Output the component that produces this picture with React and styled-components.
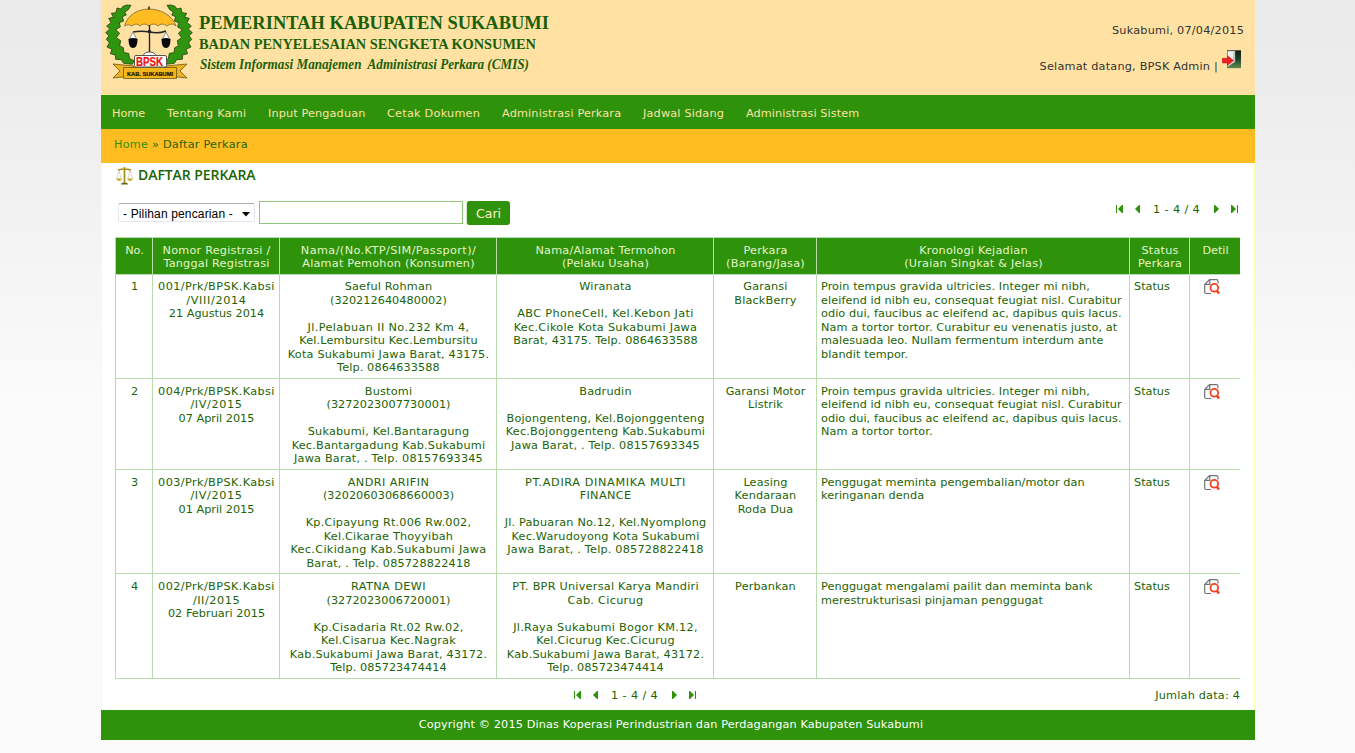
import React from 'react';
import styled, { createGlobalStyle } from 'styled-components';

const Global = createGlobalStyle`
  html { background: #fbfbfb; }
  body {
    margin: 0; min-height: 753px; overflow: hidden;
    background: linear-gradient(#eaeaea 0, #ededed 100px, #fbfbfb 410px, #fbfbfb 100%);
    font-family: "DejaVu Sans", Verdana, sans-serif; font-size: 11.25px; line-height: 13.5px; color: #1c6406;
  }
  * { box-sizing: border-box; }
`;
const Page = styled.div`width: 1154px; margin-left: 101px;`;
const Header = styled.header`
  height: 95px; background: #ffe2a3; display: flex; justify-content: space-between;
`;
const Brand = styled.div`display: flex; padding-left: 3px;`;
const Titles = styled.svg`
  display: block; flex: none; width: 400px; height: 95px; overflow: visible;
  font-family: "Liberation Serif", serif; fill: #1b6008;
`;
const UserBox = styled.div`
  display: flex; flex-direction: column; align-items: flex-end; color: #333; padding: 24px 11px 0 0; letter-spacing: .21px;
`;
const Welcome = styled.div`display: flex; align-items: flex-start; margin-top: 12px; padding-right: 2px; span { padding-top: 10px; margin-right: 4px; }`;
const Nav = styled.nav`
  height: 34px; background: #2e920b; display: flex; padding: 12px 0 0 11px; gap: 22px;
`;
const NavLink = styled.a`
  color: #ffe2a3; white-space: nowrap; width: ${p => p.$w}px; letter-spacing: ${p => p.$ls}px;
`;
const Crumbs = styled.div`
  height: 34px; background: #ffbd22; padding: 9px 13px; letter-spacing: .24px;
  b { color: #2e920b; font-weight: 400; }
`;
const Main = styled.main`
  height: 547px; background: #fff; border: solid #ffffb8; border-width: 0 1px; padding: 0 14px 0 13px;
`;
const Heading = styled.h1`
  margin: 0; height: 38px; padding: 3px 0 0 1px; display: flex; gap: 5px;
  font: 600 14px/18px "Open Sans", sans-serif; color: #1c6406; letter-spacing: -.07px;
  svg { margin-top: 1px; }
`;
const Tools = styled.div`display: flex; height: 36px; padding-left: 3px;`;
const Select = styled.div`
  width: 137px; height: 19px; margin-top: 2px; border: 1px solid #e3e6ee; border-top-color: #abadb3; border-radius: 2px;
  font: 12px/20px "Liberation Sans", sans-serif; letter-spacing: .15px; color: #000;
  display: flex; justify-content: space-between; padding: 0 4px; white-space: nowrap;
  svg { margin-top: 8px; }
`;
const Input = styled.div`width: 204px; height: 23px; margin-left: 4px; border: 1px solid #8fc57d;`;
const Button = styled.button`
  width: 44px; height: 24px; margin-left: 3px; padding: 0; border: 1px solid #d5e9ce; border-width: 0 0 0 1px; border-radius: 3px;
  background: #2e920b; color: #fff2cf; font: 12.5px/25px "DejaVu Sans", sans-serif;
`;
const Pager = styled.div`
  display: flex; height: 14px; gap: 12px; margin: ${p => p.$top ? '2px 2px 0 auto' : '0'};
  svg { flex: none; margin-top: 2px; }
  span { width: 48px; margin: 0 1px; letter-spacing: .38px; white-space: nowrap; }
`;
const Table = styled.div`width: 1125px; border-top: 1px solid #b8dcae;`;
const Row = styled.div`
  display: grid; grid-template-columns: 37px 127px 217px 217px 103px 313px 60px 51px;
  height: ${p => p.$h}px; border-bottom: 1px solid #b8dcae;
  background: ${p => p.$head ? '#2e920b' : '#fff'}; color: ${p => p.$head ? '#e4f5c8' : '#1c6406'};
`;
const Cell = styled.div`
  border-left: 1px solid #b8dcae; padding: ${p => p.$pad}px 4px 0; text-align: ${p => p.$left ? 'left' : 'center'};
  white-space: pre;
`;
const Line = styled.div`
  height: 13.5px; display: flex; justify-content: ${p => p.$left ? 'flex-start' : 'center'};
  padding-left: ${p => p.$left ? 0 : 1}px; letter-spacing: ${p => p.$ls}px;
`;
const IconCell = styled(Cell)`padding-right: 9px; svg { display: block; margin: 0 auto; }`;
const Bottom = styled.div`
  display: flex; justify-content: space-between; padding: 10px 0 0 459px; white-space: nowrap; letter-spacing: .2px;
`;
const Footer = styled.footer`
  height: 30px; background: #2e920b; color: #fff; line-height: 29px; text-align: center; padding-right: 14px; letter-spacing: .138px;
`;

const Laurel = () => (
  <path
    transform="scale(.3333) translate(-27 0)"
    d="M108 16L96 15 84 19 78 27 66 24 63 38 49 40 55 52 41 55 48 68 35 78 44 87 32 98 42 107 34 118 43 128 36 141 51 148 46 161 61 165 62 178 79 179 86 190 112 193 118 182 104 176 101 160 87 158 85 143 74 138 77 122 64 113 74 100 62 89 76 81 73 68 86 63 82 50 94 45 89 36 100 29z"
    fill="#2f9510" stroke="#26460f" strokeWidth="2.500" strokeLinejoin="round"
  />
);
const Logo = () => (
  <svg width="94" height="84" viewBox="0 0 94 84">
    <Laurel />
    <g transform="translate(90 0) scale(-1 1)"><Laurel /></g>
    <path d="M20.500 26C23 16 33 9 45 9s24 7 27 17q-4-4-9 0-5-4-9 0-4-4-9 0-5-4-9 0-4-4-8 0-4-3-7.500 0z" fill="#ffbd22" stroke="#80642c" strokeWidth=".8" />
    <path d="M45 6.500v3" stroke="#222" strokeWidth="1.500" />
    <path d="M45.500 25v29M29 32q8-1.500 16.500 0 9 2 16.500-1" fill="none" stroke="#252525" strokeWidth="1.400" />
    <circle cx="45.500" cy="31.500" r="1.800" fill="#222" />
    {[29, 62].map(x => (
      <g key={x}>
        <path d={`M${x} 32l-4 8h8z`} fill="#fff" stroke="#777" strokeWidth=".8" />
        <path d={`M${x - 4.500} 39q4.500-2 9 0 0 9-4.500 9t-4.500-9z`} fill="#080808" />
      </g>
    ))}
    <path d="M39 56q1-4 6.500-4t6.500 4z" fill="#fff" stroke="#555" />
    <path d="M9 64l21 2-2 10-19 2 7-7zM83 64l-21 2 2 10 19 2-7-7z" fill="#eeb320" stroke="#6b5515" strokeWidth=".8" />
    <path d="M19.500 67.500h53v11h-53z" fill="#f2b61b" stroke="#6b5515" strokeWidth=".8" />
    <rect x="30.500" y="55.500" width="32" height="11.500" rx="1.500" fill="#fff" stroke="#555" />
    <text x="45.500" y="65.500" textAnchor="middle" textLength="27" lengthAdjust="spacingAndGlyphs" fontFamily="Liberation Sans" fontWeight="700" fontSize="12" fill="#f01010" stroke="#f01010" strokeWidth=".2">BPSK</text>
    <text x="46" y="75.500" textAnchor="middle" textLength="46" lengthAdjust="spacingAndGlyphs" fontFamily="Liberation Sans" fontWeight="700" fontSize="6" fill="#151000" stroke="#151000" strokeWidth=".2">KAB. SUKABUMI</text>
  </svg>
);
const Door = () => (
  <svg width="20" height="19" viewBox="0 0 20 19">
    <defs>
      <linearGradient id="room" x1="0" y1="0" x2="0" y2="1">
        <stop offset="0" stopColor="#101a12" /><stop offset=".5" stopColor="#20402a" /><stop offset="1" stopColor="#5c8d48" />
      </linearGradient>
    </defs>
    <path d="M5 .3h14v17.900H5z" fill="url(#room)" />
    <path d="M5.500 1h7.500v10.500l-7.500 5.500z" fill="#eef0ee" stroke="#8a928c" strokeWidth=".5" />
    <path d="M11 2.500l2-1.500v11l-2 1.500z" fill="#bfc5c0" />
    <path d="M.3 8.300h5.200V5.800l6 4.800-6 4.800v-2.500H.3z" fill="#ed2323" stroke="#c01818" strokeWidth=".6" />
  </svg>
);
const Scales = () => (
  <svg width="17" height="18" viewBox="0 0 17 18" fill="none">
    <path d="M3 3l-2.500 9M3 3l2 9M14 3l-2 9M14 3l2.500 9" stroke="#cfccc0" strokeWidth=".8" />
    <path d="M2 3Q8.500 1 15 3M8.500 0v16" stroke="#a99017" strokeWidth="1.700" />
    <path d="M0 11.500h6q-1 2.500-3 2.500t-3-2.500zM11 11.500h6q-1 2.500-3 2.500t-3-2.500z" fill="#c5ae28" />
    <path d="M5 17.500q0-2 3.500-2t3.500 2z" fill="#755e12" />
  </svg>
);
const Detail = () => (
  <svg width="17" height="16" viewBox="0 0 17 16" fill="none">
    <path d="M14 4.500V2.200q0-1.500-1.500-1.500H5.500L.7 5.500V13q0 1.500 1.500 1.500H7M5.800 1v4.300H1" stroke="#727272" strokeWidth="1.200" />
    <circle cx="10.300" cy="8.800" r="3.900" fill="#fff" stroke="#f4411e" strokeWidth="1.800" />
    <path d="M13 12l2 2.300" stroke="#f4411e" strokeWidth="2.600" />
  </svg>
);
const Arrow = ({ back, bar }) => {
  const w = bar ? 7 : 5;
  return (
    <svg width={w} height="8" viewBox={`0 0 ${w} 8`} fill="#2e920b">
      <g transform={back ? `translate(${w} 0) scale(-1 1)` : undefined}>
        <path d="M0 0h1l4 4-4 4H0z" />
        {bar && <path d="M6 0h1v8H6z" />}
      </g>
    </svg>
  );
};
const Pages = ({ top }) => (
  <Pager $top={top}>
    <Arrow back bar /><Arrow back /><span>1 - 4 / 4</span><Arrow /><Arrow bar />
  </Pager>
);

const tracking = {
  'Nama/(No.KTP/SIM/Passport)/': .42, 'No.': 0, 'Detil': 0,
  '/VIII/2014': .65, '/IV/2015': .6, '/II/2015': .55,
  '21 Agustus 2014': 0, '07 April 2015': 0, '01 April 2015': 0, '02 Februari 2015': .05,
  'Jl.Pelabuan II No.232 Km 4,': .37, 'Kel.Lembursitu Kec.Lembursitu': .14, 'Telp. 0864633588': .12, 'Telp. 085723474414': .07,
  'ANDRI ARIFIN': .42, 'RATNA DEWI': .42, 'Kec.Cikidang Kab.Sukabumi Jawa': .32, 'Barat, . Telp. 085728822418': .15,
  'ABC PhoneCell, Kel.Kebon Jati': .35, 'Kec.Cikole Kota Sukabumi Jawa': .28, 'Barat, 43175. Telp. 0864633588': .1,
  'PT.ADIRA DINAMIKA MULTI': .62, 'FINANCE': .35, 'PT. BPR Universal Karya Mandiri': .24, 'Cab. Cicurug': .3,
  'Jl.Raya Sukabumi Bogor KM.12,': .28, 'Garansi Motor': .03,
};
const columnTracking = [0, .4, .2, .2, .15, .075];
const trackingOf = (t, col) => tracking[t] ?? (/^\(\d+\)$/.test(t) ? .04 : col);
const Lines = ({ text, left, ls }) => text.split('\n').map((t, i) => <Line key={i} $left={left} $ls={trackingOf(t, ls)}>{t}</Line>);

const nav = [['Home', 33, 0], ['Tentang Kami', 79, .25], ['Input Pengaduan', 97, .13], ['Cetak Dokumen', 93, .24], ['Administrasi Perkara', 119, .16], ['Jadwal Sidang', 81, .18], ['Administrasi Sistem', 113, .08]];
const heads = ['No.', 'Nomor Registrasi /\nTanggal Registrasi', 'Nama/(No.KTP/SIM/Passport)/\nAlamat Pemohon (Konsumen)', 'Nama/Alamat Termohon\n(Pelaku Usaha)', 'Perkara\n(Barang/Jasa)', 'Kronologi Kejadian\n(Uraian Singkat & Jelas)', 'Status\nPerkara', 'Detil'];
const rows = [
  { h: 104, pad: 5, c: ['1', '001/Prk/BPSK.Kabsi\n/VIII/2014\n21 Agustus 2014', 'Saeful Rohman\n(320212640480002)\n\nJl.Pelabuan II No.232 Km 4,\nKel.Lembursitu Kec.Lembursitu\nKota Sukabumi Jawa Barat, 43175.\nTelp. 0864633588', 'Wiranata\n\nABC PhoneCell, Kel.Kebon Jati\nKec.Cikole Kota Sukabumi Jawa\nBarat, 43175. Telp. 0864633588', 'Garansi\nBlackBerry', 'Proin tempus gravida ultricies. Integer mi nibh,\neleifend id nibh eu, consequat feugiat nisl. Curabitur\nodio dui, faucibus ac eleifend ac, dapibus quis lacus.\nNam a tortor tortor. Curabitur eu venenatis justo, at\nmalesuada leo. Nullam fermentum interdum ante\nblandit tempor.'] },
  { h: 91, pad: 5.5, c: ['2', '004/Prk/BPSK.Kabsi\n/IV/2015\n07 April 2015', 'Bustomi\n(3272023007730001)\n\nSukabumi, Kel.Bantaragung\nKec.Bantargadung Kab.Sukabumi\nJawa Barat, . Telp. 08157693345', 'Badrudin\n\nBojongenteng, Kel.Bojonggenteng\nKec.Bojonggenteng Kab.Sukabumi\nJawa Barat, . Telp. 08157693345', 'Garansi Motor\nListrik', 'Proin tempus gravida ultricies. Integer mi nibh,\neleifend id nibh eu, consequat feugiat nisl. Curabitur\nodio dui, faucibus ac eleifend ac, dapibus quis lacus.\nNam a tortor tortor.'] },
  { h: 104, pad: 5.5, c: ['3', '003/Prk/BPSK.Kabsi\n/IV/2015\n01 April 2015', 'ANDRI ARIFIN\n(32020603068660003)\n\nKp.Cipayung Rt.006 Rw.002,\nKel.Cikarae Thoyyibah\nKec.Cikidang Kab.Sukabumi Jawa\nBarat, . Telp. 085728822418', 'PT.ADIRA DINAMIKA MULTI\nFINANCE\n\nJl. Pabuaran No.12, Kel.Nyomplong\nKec.Warudoyong Kota Sukabumi\nJawa Barat, . Telp. 085728822418', 'Leasing\nKendaraan\nRoda Dua', 'Penggugat meminta pengembalian/motor dan\nkeringanan denda'] },
  { h: 105, pad: 6, c: ['4', '002/Prk/BPSK.Kabsi\n/II/2015\n02 Februari 2015', 'RATNA DEWI\n(3272023006720001)\n\nKp.Cisadaria Rt.02 Rw.02,\nKel.Cisarua Kec.Nagrak\nKab.Sukabumi Jawa Barat, 43172.\nTelp. 085723474414', 'PT. BPR Universal Karya Mandiri\nCab. Cicurug\n\nJl.Raya Sukabumi Bogor KM.12,\nKel.Cicurug Kec.Cicurug\nKab.Sukabumi Jawa Barat, 43172.\nTelp. 085723474414', 'Perbankan', 'Penggugat mengalami pailit dan meminta bank\nmerestrukturisasi pinjaman penggugat'] },
];

export default function App() {
  return (
    <Page>
      <Global />
      <Header>
        <Brand>
          <Logo />
          <Titles viewBox="0 0 400 95">
            <text x="1" y="28.500" fontSize="19.500" fontWeight="700" textLength="350" lengthAdjust="spacingAndGlyphs">PEMERINTAH KABUPATEN SUKABUMI</text>
            <text x="1" y="49.300" fontSize="15.500" fontWeight="700" textLength="337" lengthAdjust="spacingAndGlyphs">BADAN PENYELESAIAN SENGKETA KONSUMEN</text>
            <text x="2" y="69" fontSize="14" fontWeight="700" fontStyle="italic" textLength="329" lengthAdjust="spacingAndGlyphs">{'Sistem Informasi Manajemen\u00a0 Administrasi Perkara (CMIS)'}</text>
          </Titles>
        </Brand>
        <UserBox>
          <div>Sukabumi, 07/04/2015</div>
          <Welcome><span>Selamat datang, BPSK Admin |</span><Door /></Welcome>
        </UserBox>
      </Header>
      <Nav>{nav.map(([t, w, ls]) => <NavLink key={t} $w={w} $ls={ls}>{t}</NavLink>)}</Nav>
      <Crumbs><b>Home</b> » Daftar Perkara</Crumbs>
      <Main>
        <Heading><Scales />DAFTAR PERKARA</Heading>
        <Tools>
          <Select>- Pilihan pencarian -<svg width="8" height="5"><path d="M0 0h8L4 4.500z" /></svg></Select>
          <Input />
          <Button>Cari</Button>
          <Pages top />
        </Tools>
        <Table>
          <Row $h={37} $head>{heads.map(h => <Cell key={h} $pad={5.5}><Lines text={h} ls={.22} /></Cell>)}</Row>
          {rows.map((r, n) => (
            <Row key={r.c[0]} $h={r.h}>
              {r.c.map((t, i) => <Cell key={i} $pad={r.pad} $left={i === 5}><Lines text={t} left={i === 5} ls={columnTracking[i]} /></Cell>)}
              <Cell $pad={r.pad} $left>Status</Cell>
              <IconCell $pad={n ? 5 : 4}><Detail /></IconCell>
            </Row>
          ))}
        </Table>
        <Bottom><Pages /><span>Jumlah data: 4</span></Bottom>
      </Main>
      <Footer>Copyright © 2015 Dinas Koperasi Perindustrian dan Perdagangan Kabupaten Sukabumi</Footer>
    </Page>
  );
}
